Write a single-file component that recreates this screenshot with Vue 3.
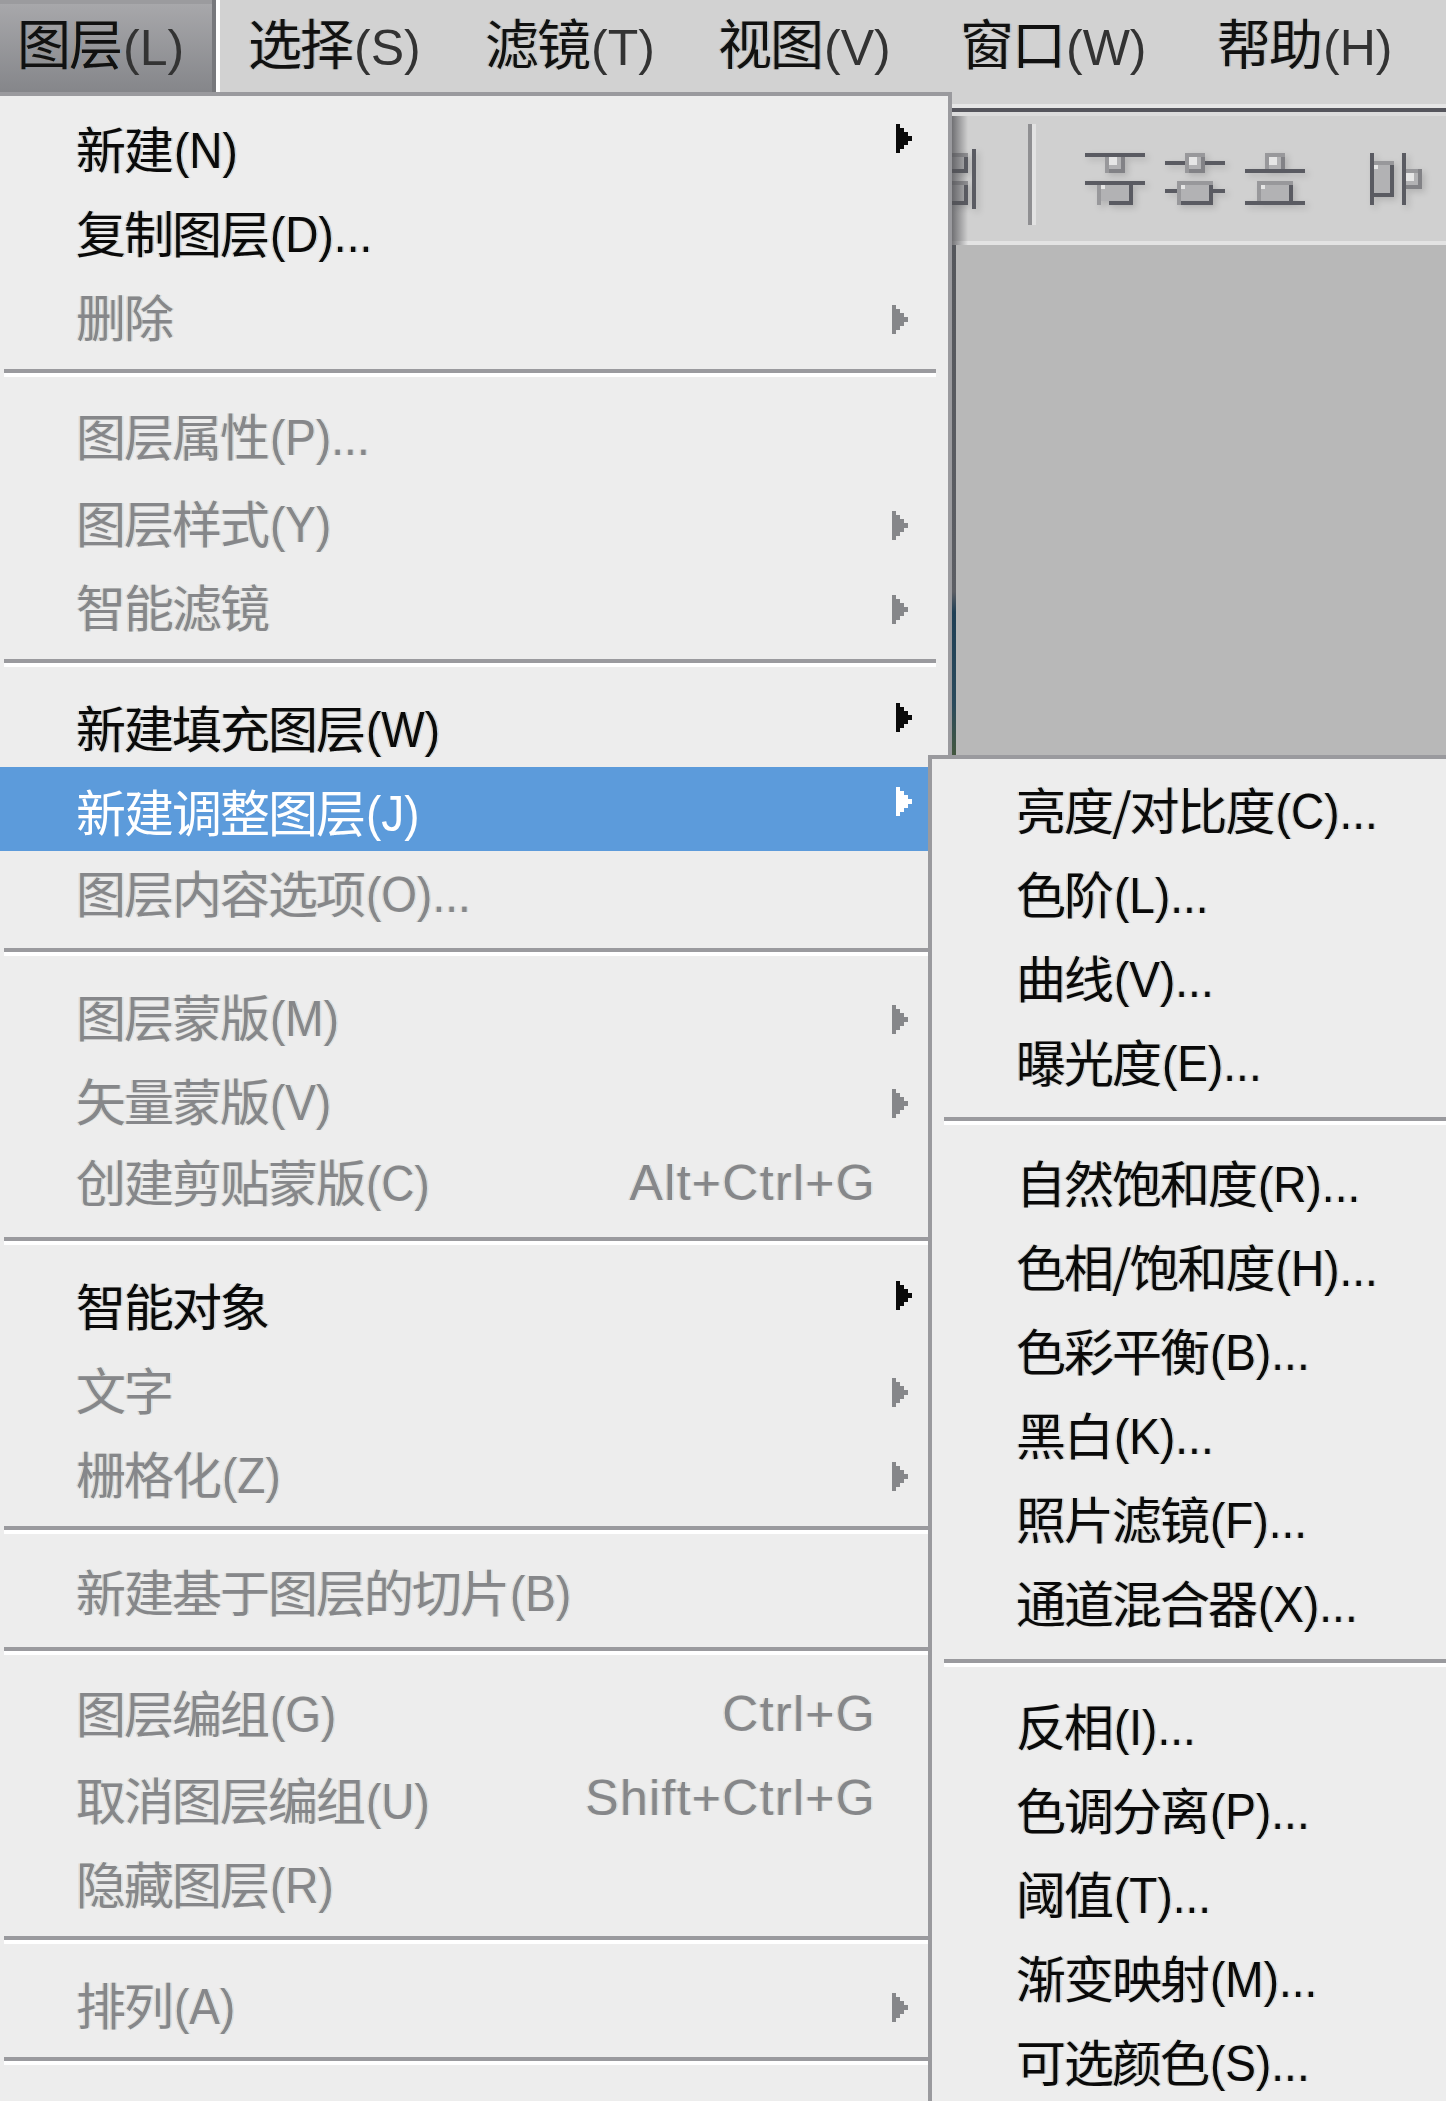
<script setup>
const parse = (s) => {
  const i = s.indexOf('(')
  return i < 0 ? { c: s, l: '' } : { c: s.slice(0, i), l: s.slice(i) }
}
const tabs = [
  { s: '图层(L)', w: 220, active: true },
  { s: '选择(S)', w: 237 },
  { s: '滤镜(T)', w: 233 },
  { s: '视图(V)', w: 242 },
  { s: '窗口(W)', w: 257 },
  { s: '帮助(H)', w: 257 }
].map((t) => ({ ...t, ...parse(t.s) }))
const barColumns = tabs.map((t) => t.w + 'px').join(' ')

const row = (s, state = 'off', arrow = false, key = '', lift = false) => ({ s, state, arrow, key, lift, ...parse(s) })
const mainGroups = [
  [row('新建(N)', 'on', true), row('复制图层(D)...', 'on'), row('删除', 'off', true)],
  [row('图层属性(P)...', 'off', false, '', true), row('图层样式(Y)', 'off', true), row('智能滤镜', 'off', true)],
  [row('新建填充图层(W)', 'on', true), row('新建调整图层(J)', 'hl', true), row('图层内容选项(O)...', 'off', false, '', true)],
  [row('图层蒙版(M)', 'off', true), row('矢量蒙版(V)', 'off', true), row('创建剪贴蒙版(C)', 'off', false, 'Alt+Ctrl+G', true)],
  [row('智能对象', 'on', true), row('文字', 'off', true), row('栅格化(Z)', 'off', true)],
  [row('新建基于图层的切片(B)', 'off', false, '', true)],
  [row('图层编组(G)', 'off', false, 'Ctrl+G', true), row('取消图层编组(U)', 'off', false, 'Shift+Ctrl+G'), row('隐藏图层(R)')],
  [row('排列(A)', 'off', true)]
]
const subGroups = [
  ['亮度/对比度(C)...', '色阶(L)...', '曲线(V)...', '曝光度(E)...'],
  ['自然饱和度(R)...', '色相/饱和度(H)...', '色彩平衡(B)...', '黑白(K)...', '照片滤镜(F)...', '通道混合器(X)...'],
  ['反相(I)...', '色调分离(P)...', '阈值(T)...', '渐变映射(M)...', '可选颜色(S)...']
].map((g) => g.map((s) => row(s, 'on')))

const ARROW = 'M0 0h4v4h4v4h4v4h4v5h-4v4h-4v4h-4v4H0z'
</script>

<template>
  <div class="page">
    <div class="menubar" :style="{ gridTemplateColumns: barColumns }">
      <div v-for="t in tabs" :key="t.s" class="tab" :class="{ active: t.active }">
        <span class="tab-c">{{ t.c }}</span><span class="tab-l">{{ t.l }}</span>
      </div>
    </div>

    <div class="workspace">
      <div class="rule"></div>
      <div class="toolbar">
        <svg class="tools" width="494" height="125" viewBox="952 116 494 125" shape-rendering="crispEdges">
          <g class="shadowed">
            <path fill="#8f8f92" d="M952 153h16v4h-16zM952 181h16v4h-16z" />
            <path fill="#b0b0b2" d="M952 157h12v12h-12zM952 185h12v16h-12z" />
            <path fill="#5a5b62" d="M964 157h4v16h-16v-4h12zM964 185h4v20h-16v-4h12zM972 149h4v60h-4z" />

            <path fill="#5a5b62" d="M1085 153h60v4h-60zM1085 181h60v4h-60zM1109 201h24v4h-24zM1129 185h4v16h-4z" />
            <path fill="#98989b" d="M1105 157h20v16h-20zM1097 185h4v20h-4z" />
            <path fill="#b2b2b4" d="M1109 157h12v12h-12zM1101 185h28v16h-28z" />
            <path fill="#e6e6e6" d="M1109 157h8v8h-8zM1101 185h4v4h-4z" />
            <path fill="#828286" d="M1121 157h4v16h-16v-4h12z" />

            <path fill="#5a5b62" d="M1165 161h20v4h-20zM1205 161h20v4h-20zM1165 189h12v4h-12zM1213 189h12v4h-12zM1181 201h32v4h-32zM1209 185h4v16h-4z" />
            <path fill="#98989b" d="M1185 153h20v20h-20zM1177 181h36v4h-36zM1177 181h4v24h-4z" />
            <path fill="#b2b2b4" d="M1189 157h12v12h-12zM1181 185h28v16h-28z" />
            <path fill="#e6e6e6" d="M1189 157h8v8h-8zM1181 185h4v4h-4z" />
            <path fill="#828286" d="M1201 157h4v16h-16v-4h12z" />

            <path fill="#5a5b62" d="M1245 169h60v4h-60zM1245 201h60v4h-60zM1289 185h4v16h-4z" />
            <path fill="#98989b" d="M1265 153h20v16h-20zM1257 181h36v4h-36zM1257 181h4v20h-4z" />
            <path fill="#b2b2b4" d="M1269 157h12v12h-12zM1261 185h28v16h-28z" />
            <path fill="#e6e6e6" d="M1269 157h8v8h-8zM1261 185h4v4h-4z" />
            <path fill="#828286" d="M1281 157h4v12h-4z" />

            <path fill="#5a5b62" d="M1370 153h4v52h-4zM1402 153h4v52h-4zM1390 165h4v32h-20v-4h16z" />
            <path fill="#98989b" d="M1374 161h20v4h-20zM1406 169h16v4h-16z" />
            <path fill="#b2b2b4" d="M1374 165h16v28h-16zM1406 173h12v12h-12z" />
            <path fill="#e6e6e6" d="M1374 165h4v4h-4zM1406 173h8v8h-8z" />
            <path fill="#828286" d="M1418 169h4v20h-16v-4h12z" />
          </g>
          <path fill="#8f8f92" d="M1028 124h4v101h-4z" />
          <path fill="#e2e2e2" d="M1032 124h4v101h-4z" />
        </svg>
        <div class="cast"></div>
      </div>
      <div class="edge"></div>
    </div>

    <div class="menu main">
      <div v-for="(g, gi) in mainGroups" :key="gi" class="group">
        <div v-for="r in g" :key="r.s" class="row" :class="[r.state, { lift: r.lift }]">
          <span class="label"><span>{{ r.c }}</span><span class="lat">{{ r.l }}</span></span>
          <span v-if="r.key" class="shortcut">{{ r.key }}</span>
          <svg v-if="r.arrow" class="arrow" width="16" height="29" viewBox="0 0 16 29" shape-rendering="crispEdges">
            <path :d="ARROW" fill="currentColor" />
          </svg>
        </div>
        <div class="sep"></div>
      </div>
    </div>

    <div class="menu sub">
      <div v-for="(g, gi) in subGroups" :key="gi" class="group">
        <div v-for="r in g" :key="r.s" class="row on">
          <span class="label"><span>{{ r.c }}</span><span class="lat">{{ r.l }}</span></span>
        </div>
        <div v-if="gi < subGroups.length - 1" class="sep"></div>
      </div>
    </div>
  </div>
</template>

<style scoped>
.page {
  position: relative;
  width: 1446px;
  height: 2101px;
  overflow: hidden;
  background: #b8b8b8;
  font-family: "Noto Sans CJK SC", "Liberation Sans", sans-serif;
  color: #000;
}
.menubar {
  display: grid;
  height: 104px;
  background: #d2d2d2;
  align-items: start;
}
.tab {
  height: 92px;
  box-sizing: border-box;
  padding-left: 28px;
  line-height: 84px;
  white-space: nowrap;
  color: #111;
}
.tab.active {
  padding-left: 17px;
  background: linear-gradient(#a9a9ac, #85868a);
  border-right: 4px solid #fff;
  box-shadow: inset -4px 0 0 #77787c, inset 0 4px 0 #9b9b9e;
}
.tab-c {
  font-size: 54px;
  letter-spacing: -2px;
  text-shadow: -1.5px 0 rgba(200, 130, 50, 0.3), 1.5px 0 rgba(70, 150, 220, 0.3);
}
.tab-l {
  font-family: "Liberation Sans", sans-serif;
  font-size: 50px;
  color: #333;
  margin-left: 2px;
}
.workspace {
  display: flex;
  flex-direction: column;
  align-items: stretch;
  padding-left: 952px;
}
.rule {
  height: 4px;
  background: #55555c;
  border-top: 4px solid #e6e6e6;
  border-bottom: 4px solid #dcdcdc;
}
.toolbar {
  position: relative;
  height: 125px;
  background: #d0d0d0;
  border-bottom: 4px solid #e3e3e3;
}
.tools {
  display: block;
}
.shadowed {
  filter: drop-shadow(3px 3px 3px rgba(0, 0, 0, 0.14));
}
.cast {
  position: absolute;
  left: 0;
  top: 0;
  bottom: -4px;
  width: 16px;
  background: linear-gradient(to right, rgba(80, 80, 84, 0.75), rgba(80, 80, 84, 0));
}
.edge {
  width: 4px;
  height: 510px;
  background: linear-gradient(#55575c 0, #5c5e64 68%, #1f3f55 72%, #2a4a5c 90%, #44583f 100%);
}
.menu {
  position: absolute;
  background: #ededed;
  box-sizing: border-box;
}
.main {
  left: 0;
  top: 92px;
  width: 952px;
  height: 2009px;
  border-top: 4px solid #9a9a9e;
  border-right: 4px solid #9a9a9e;
  padding-top: 8px;
}
.sub {
  left: 928px;
  top: 755px;
  width: 518px;
  height: 1346px;
  border-top: 4px solid #9a9a9e;
  border-left: 4px solid #9a9a9e;
  padding-top: 6px;
}
.row {
  height: 84px;
  display: flex;
  align-items: flex-start;
  padding-left: 76px;
  white-space: nowrap;
}
.sub .row {
  padding-left: 84px;
}
.label {
  height: 84px;
  line-height: 87px;
  font-size: 50px;
  letter-spacing: -2px;
}
.lift .label {
  line-height: 81px;
}
.lat {
  display: inline-block;
  font-family: "Liberation Sans", sans-serif;
  font-size: 46px;
  letter-spacing: 0;
  margin-left: 2px;
  transform: scaleY(1.1);
  vertical-align: 3px;
}
.shortcut {
  margin-left: auto;
  margin-right: 72px;
  font-family: "Liberation Sans", sans-serif;
  font-size: 50px;
  letter-spacing: 1.3px;
  line-height: 86px;
}
.arrow {
  margin-left: auto;
}
.on {
  color: #0a0a0a;
}
.on .label {
  text-shadow: -1.5px 0 rgba(200, 130, 50, 0.3), 1.5px 0 rgba(70, 150, 220, 0.3);
}
.on .arrow {
  margin-right: 36px;
  margin-top: 20px;
}
.off {
  color: #86878a;
}
.off .label,
.off .shortcut {
  text-shadow: -1.5px 0 rgba(210, 170, 120, 0.3), 1.5px 0 rgba(140, 190, 220, 0.3);
}
.off .arrow {
  margin-right: 40px;
  margin-top: 33px;
}
.hl {
  background: #5c9bdb;
  color: #fff;
}
.hl .arrow {
  margin-right: 36px;
  margin-top: 20px;
}
.sep {
  height: 4px;
  background: #9a9a9e;
  border-bottom: 4px solid #fff;
  margin: 13px 12px 16px 4px;
}
.main .group:first-child .sep {
  margin-bottom: 17px;
}
.sub .sep {
  margin: 16px 0 13px 12px;
}
.sub .group:nth-child(2) .sep {
  margin: 17px 0 14px 12px;
}
</style>
